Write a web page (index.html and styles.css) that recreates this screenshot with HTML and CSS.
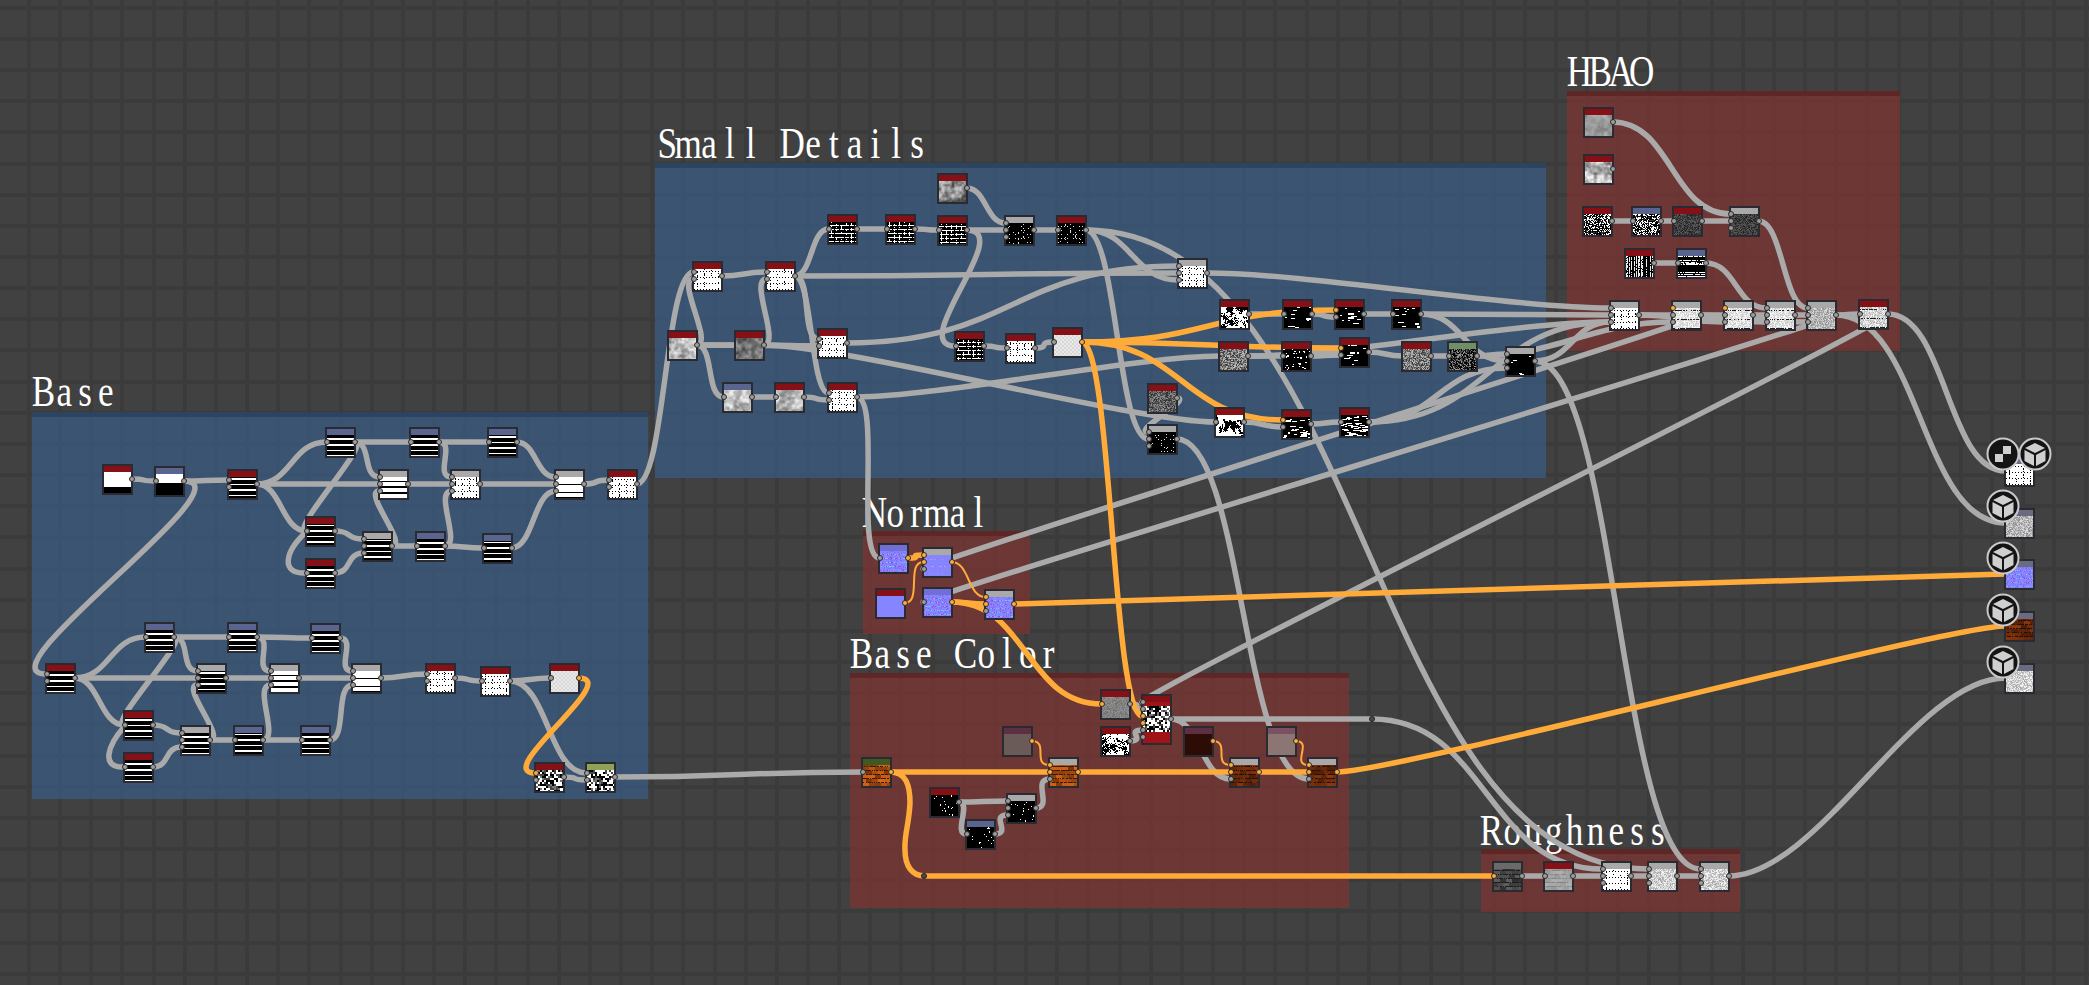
FILE: index.html
```html
<!DOCTYPE html>
<html lang="en">
<head>
<meta charset="utf-8">
<title>Material graph</title>
<link rel="stylesheet" href="styles.css">
</head>
<body>
<main class="canvas">
  <section class="frame frame-blue frame-base"></section>
  <section class="frame frame-blue frame-small"></section>
  <section class="frame frame-red frame-hbao"></section>
  <section class="frame frame-red frame-normal"></section>
  <section class="frame frame-red frame-color"></section>
  <section class="frame frame-red frame-rough"></section>

  <svg class="layer" width="2089" height="985" aria-label="Frame titles">
    <text class="label" transform="translate(33 406) scale(.78 1)" x="13.3 40 66.7 93.3">Base</text>
    <text class="label" transform="translate(657 158) scale(.78 1)" x="13.3 40 66.7 93.3 120 146.7 173.4 200 226.7 253.4 280 306.7 333.4">Small Details</text>
    <text class="label" transform="translate(1569 86) scale(.78 1)" x="13.3 40 66.7 93.3">HBAO</text>
    <text class="label" transform="translate(864 527) scale(.78 1)" x="13.3 40 66.7 93.3 120 146.7">Normal</text>
    <text class="label" transform="translate(851 668) scale(.78 1)" x="13.3 40 66.7 93.3 120 146.7 173.4 200 226.7 253.4">Base Color</text>
    <text class="label" transform="translate(1481 845) scale(.78 1)" x="13.3 40 66.7 93.3 120 146.7 173.4 200 226.7">Roughness</text>
  </svg>

  <svg class="layer" id="wires" width="2089" height="985" aria-hidden="true"></svg>
  <div class="layer" id="nodes"></div>
  <div class="layer" id="sockets"></div>

  <svg class="layer" width="2089" height="985" aria-label="Output badges">
    <defs>
      <symbol id="badge-cube" viewBox="-17 -17 34 34">
        <circle class="badge-disc" r="15.5"/>
        <path class="badge-ink" d="M0-11 10-6 0-1-10-6ZM-10.5-4-1 1V12L-10.5 7ZM10.5-4 1 1V12L10.5 7Z"/>
      </symbol>
      <symbol id="badge-check" viewBox="-17 -17 34 34">
        <circle class="badge-disc" r="15.5"/>
        <path class="badge-ink" d="M-8-8H8V8H-8Z"/>
        <path class="badge-hole" d="M-8-8H0V0H-8ZM0 0H8V8H0Z"/>
      </symbol>
    </defs>
    <use href="#badge-check" x="1986" y="437" width="34" height="34"/>
    <use href="#badge-cube" x="2018" y="437" width="34" height="34"/>
    <use href="#badge-cube" x="1986" y="489" width="34" height="34"/>
    <use href="#badge-cube" x="1986" y="541" width="34" height="34"/>
    <use href="#badge-cube" x="1986" y="593" width="34" height="34"/>
    <use href="#badge-cube" x="1986" y="645" width="34" height="34"/>
  </svg>
</main>
<script src="graph.js"></script>
</body>
</html>
```

FILE: styles.css
```css
html, body {
  margin: 0;
  padding: 0;
  background: #414141;
  overflow: hidden;
}

.canvas {
  position: relative;
  width: 2089px;
  height: 985px;
  overflow: hidden;
  background-color: #414141;
  background-image:
    repeating-linear-gradient(90deg, transparent 0 27px, #3b3b3b 27px 31px, transparent 31px 31.16px),
    repeating-linear-gradient(180deg, transparent 0 5.7px, #3b3b3b 5.7px 9.7px, transparent 9.7px 31.16px);
}

.layer {
  position: absolute;
  left: 0;
  top: 0;
}

.frame {
  position: absolute;
  box-sizing: border-box;
  border-top: 5px solid;
}

.frame-blue {
  background: rgba(55, 93, 135, .7);
  border-top-color: #2d4461;
}

.frame-red {
  background: rgba(128, 51, 50, .7);
  border-top-color: #5e2624;
}

.frame-base { left: 32px; top: 412px; width: 616px; height: 387px; }
.frame-small { left: 655px; top: 163px; width: 891px; height: 315px; }
.frame-hbao { left: 1567px; top: 91px; width: 333px; height: 260px; }
.frame-normal { left: 863px; top: 531px; width: 167px; height: 103px; }
.frame-color { left: 850px; top: 673px; width: 499px; height: 235px; }
.frame-rough { left: 1481px; top: 849px; width: 259px; height: 63px; }

.label {
  font-family: "Liberation Serif", serif;
  font-size: 45px;
  fill: #fff;
  text-anchor: middle;
}

.wire {
  fill: none;
  stroke: #aaa;
  stroke-width: 5.5;
}

.wire-color {
  stroke: #ffab3a;
}

.wire-thin {
  stroke: #ffab3a;
  stroke-width: 2;
}

.node {
  position: absolute;
  width: 27px;
  height: 27px;
  border: 2px solid #2a2a32;
}

.node-tall {
  height: 47px;
}

.thumb {
  display: block;
}

.head {
  position: absolute;
  left: 0;
  top: 0;
  width: 100%;
  height: 6px;
}

.head-r { background: #861015; }
.head-b { background: #59648f; }
.head-g { background: #a9a9a9; }
.head-d { background: #6a6a6a; }
.head-l { background: #8fa356; }
.head-m { background: #6d9066; }
.head-f { background: #3f5a20; }
.head-p { background: #5d2f40; }
.head-q { background: #7b5162; }
.head-o { background: #6a6a80; }
.head-n { background: #6f6fd6; }

.sock {
  position: absolute;
  width: 4px;
  height: 4px;
  border-radius: 50%;
  background: #9c9c9c;
  border: 1px solid #2c2c2c;
  transform: translate(-50%, -50%);
}

.sock-on {
  background: #ffab3a;
}

.dot {
  position: absolute;
  width: 4px;
  height: 4px;
  border-radius: 50%;
  background: #4a4a4a;
  border: 1px solid #222;
  transform: translate(-50%, -50%);
}

.badge-disc {
  fill: #141414;
  stroke: #c9c9c9;
  stroke-width: 2;
}

.badge-ink { fill: #cfcfcf; }
.badge-hole { fill: #161616; }
```

FILE: graph.js
```js
// Node table: id x y header thumbnail inputs (default 1) outputs (default 1)
const TABLE = `
n1 102 464 r wb78 0
n2 154 466 b wb55
n3 227 469 r L 2
n4 325 427 b L
n5 409 427 b L
n6 487 427 b L
n7 378 469 g LW 3
n8 450 469 g D 3
n9 554 469 g W 3
n10 607 469 r D 2
n11 305 516 r L
n12 362 531 g L 3
n13 415 531 b L
n14 482 533 b L
n15 305 558 r L
n16 144 622 b L
n17 227 622 b L
n18 310 623 b L
n19 45 663 r L 2
n20 196 663 g L 3
n21 269 663 g LW 3
n22 351 663 g W 3
n23 425 663 r D 2
n24 480 666 r D 1
n25 549 663 r C 1
n26 123 710 r L
n27 180 725 g L 3
n28 233 725 b L
n29 300 725 b L
n30 123 752 r L
n31 534 762 r p1 2
n32 585 762 l p1 2
a 937 173 r c5 0
b 827 214 r K
c 885 214 r K
d 937 215 r K
e 1004 215 g K2 3
f 1056 215 r K2
g 692 261 r D 2
h 765 261 r D 2
i 1177 258 g D 3
j 667 330 r c1 0
k 734 330 r c2 0
l 817 328 r D 2
m 954 331 r K
n 1005 333 r D
o 1052 327 r C
p 722 382 b c1
q 774 382 r c1
r 827 382 r D 2
s 1147 383 r z2b 0
t 1147 424 g K2 3
u 1219 299 r b1 0
v 1282 299 r d1
w 1334 299 r d1 2
x 1391 299 r d1
y 1218 341 r z1 0
z 1281 341 r d4
aa 1339 337 r d1 2
ab 1401 341 r z1 0
ac 1447 341 m p3
ad 1505 346 g d5 3
ae 1214 407 r b2
af 1281 409 r d2 2
ag 1339 407 r d3
A 1583 107 r c3 0
B 1583 154 r c4 0
C 1582 206 r p2 0
D 1631 206 b p2
E 1672 206 r z2
F 1729 206 g z2 3
G 1624 248 r stv 0
H 1676 248 b sth
I 1609 300 g D 3
J 1671 300 g z3 3
K 1723 300 g z3 3
L 1765 300 g z3 3
M 1806 300 g z4 3
N 1858 299 r z7
N1 878 543 n nor
N2 922 547 g nor2 3
N3 875 588 r #8585ff 0
N4 922 587 n nor
N5 984 589 g nor 3
B1 1100 689 r z5
B2 1141 694 r p1 6
B3 1100 726 r b3 0
B4 1002 726 p #6a5a58 0
B5 1048 757 g br1 3
B6 861 757 f br1
B7 929 787 r d6 0
B8 965 819 b d6
B9 1006 793 g d6 3
B10 1183 726 p #2c0c04 0
B11 1229 757 g br2 3
B12 1266 726 q #8c7674 0
B13 1307 757 g br2 3
R1 1492 861 d br3
R2 1543 861 r br4
R3 1601 861 g D 3
R4 1647 861 g z6 3
R5 1699 861 g z6 3
O1 2004 456 o D 0 0
O2 2004 508 o z4 0 0
O3 2004 559 o nor 0 0
O4 2004 611 o br2 0 0
O5 2004 663 o z6 0 0
`;

// Connections: from-to[.input][~tangent][!o thick orange | !t thin orange]
const LINKS = `
n1-n2 n2-n3.1 n3-n4 n3-n7.2 n3-n11 n4-n5 n4-n7.1 n4-n11~18 n5-n6 n5-n8.1 n6-n9.1 n7-n8.2 n8-n9.2
n11-n12.1 n15-n12.3 n12-n13 n13-n14 n14-n9.3 n12-n7.3 n13-n8.3 n9-n10.1 n10-g.1 n2-n19.1~70
n19-n16 n19-n20.2 n19-n26 n16-n17 n16-n20.1 n16-n26~18 n17-n18 n17-n21.1 n18-n22.1 n20-n21.2 n21-n22.2
n22-n23.1 n23-n24 n24-n25 n24-n32.1 n31-n32.2 n26-n27.1 n30-n27.3 n27-n28 n28-n29 n29-n22.3 n27-n20.3 n28-n21.3
n32-B6 j-k j-l.2 k-l.2 j-p j-g.2 g-h.1 k-h.2 h-b h-i.2 h-r.1 h-l.1 l-i.1 p-q q-r.2 r-y~80 r-N1~25 k-ae~80
b-c c-d d-e.2 e-f a-e.1 d-m~50 m-n n-o f-t.2 f-i.3 f-R4.1 i-I.1~100 s-t.1
u-v v-w.2 w-x x-I.2 y-z z-aa.2 aa-ab ab-ac ac-ad.1 x-ad.2 ag-ad.3 ad-I.3 y-I.3~100 ac-J.3~80 ae-af.2 af-ag ag-I.3 ad-R5.1~82 t-B13.3
A-F.1 C-D D-E E-F.2 F-M.1 G-H H-L.1 I-J.2 J-K.2 K-L.2 L-M.2 M-N N-O1 M-O2 I-K.3 I-L.3 J-M.3
N-B2.1~20 J-N2.3~20 M-N4~20
B1-B2.2 B3-B2.5 B2-B11.3 B7-B9.1 B7-B8~14 B8-B9.3 B9-B5.3 R1-R2 R2-R3.2 R3-R4.2 R4-R5.2 R5-O5~90
o-w.1!o o-aa.1!o o-af.1!o o-B2.3!o n25-n31.1~45!o
N1-N2.1!o N4-N5.2!o N5-O3~60!o N4-B1!o B6-B5.2!o B5-B11.2!o B11-B13.2!o B13-O4~60!o
N3-N2.2!t N2-N5.1!t B4-B5.1!t B10-B11.1!t B12-B13.1!t
`;

// Hand-routed wires that leave a socket backwards or through a reroute dot.
const ROUTES = [
  ['M305 533C285 552 280 574 306 573', ''],
  ['M124 727C108 745 100 768 124 767', ''],
  ['M1171 719H1372', ''],
  ['M1372 719C1487 719 1487 869 1602 869', ''],
  ['M890 772C906 772 910 785 910 803C909 825 904 835 905 850C905 866 912 876 925 876H1493', 'wire-color']
];
const DOTS = [[924, 876], [1372, 719]];
const LIT = ['J.1', 'K.1', 'B2.4', 'N2.1'];

const SVGNS = 'http://www.w3.org/2000/svg';
const nodes = {};
TABLE.trim().split('\n').forEach((line, index) => {
  const [id, x, y, head, thumb, ins, outs] = line.trim().split(/\s+/);
  nodes[id] = {
    id, x: +x, y: +y, head, thumb, index,
    ins: ins === undefined ? 1 : +ins,
    outs: outs === undefined ? 1 : +outs,
    lit: {}
  };
});

function inputOffsets(count) {
  if (count === 6) return [8, 15, 22, 29, 36, 43];
  if (count === 3) return [8, 15, 22];
  if (count === 2) return [11, 18];
  return [15];
}

function outputY(node) {
  return node.y + (node.ins === 6 ? 25 : 15);
}

const wires = document.getElementById('wires');
function addPath(d, extra) {
  const path = document.createElementNS(SVGNS, 'path');
  path.setAttribute('d', d);
  path.setAttribute('class', ('wire ' + (extra || '')).trim());
  wires.appendChild(path);
}

const parsed = LINKS.trim().split(/\s+/).map(token => {
  const m = token.match(/^(\w+)-(\w+)(?:\.(\d))?(?:~(\d+))?(?:!(\w))?$/);
  return { from: nodes[m[1]], to: nodes[m[2]], slot: m[3] ? +m[3] - 1 : null, tangent: m[4] ? +m[4] : null, kind: m[5] || '' };
});

ROUTES.filter(r => !r[1]).forEach(r => addPath(r[0], r[1]));
parsed.sort((a, b) => (a.kind ? 1 : 0) - (b.kind ? 1 : 0));
parsed.forEach(link => {
  const offsets = inputOffsets(link.to.ins);
  const slot = link.slot === null ? (offsets.length === 3 ? 1 : 0) : link.slot;
  const x1 = link.from.x + 29.5;
  const y1 = outputY(link.from);
  const x2 = link.to.x + 1.5;
  const y2 = link.to.y + (offsets[slot] === undefined ? 15 : offsets[slot]);
  const d = link.tangent !== null ? link.tangent : Math.max(Math.abs(x2 - x1) * 0.5, 18);
  const cls = link.kind === 'o' ? 'wire-color' : link.kind === 't' ? 'wire-thin' : '';
  addPath(`M${x1} ${y1}C${x1 + d} ${y1} ${x2 - d} ${y2} ${x2} ${y2}`, cls);
  if (link.kind) {
    link.from.litOut = true;
    link.to.lit[slot] = true;
  }
});
ROUTES.filter(r => r[1]).forEach(r => addPath(r[0], r[1]));
nodes.B6.litOut = true;
nodes.R1.lit[0] = true;
LIT.forEach(entry => {
  const [id, slot] = entry.split('.');
  nodes[id].lit[+slot - 1] = true;
});

// Procedural previews -----------------------------------------------------
function makeRandom(seed) {
  let s = (seed * 2654435761 + 12345) >>> 0;
  const next = () => {
    s = (s + 0x6d2b79f5) >>> 0;
    let t = Math.imul(s ^ (s >>> 15), 1 | s);
    t = (t + Math.imul(t ^ (t >>> 7), 61 | t)) ^ t;
    return ((t ^ (t >>> 14)) >>> 0) / 4294967296;
  };
  return next;
}

function smoothNoise(rand, cells) {
  const grid = [];
  for (let i = 0; i < (cells + 2) * (cells + 2); i++) grid.push(rand());
  const at = (a, b) => grid[b * (cells + 2) + a];
  const s = t => t * t * (3 - 2 * t);
  return (x, y) => {
    const fx = x / 27 * cells;
    const fy = y / 27 * cells;
    const ix = Math.floor(fx);
    const iy = Math.floor(fy);
    const tx = s(fx - ix);
    const ty = s(fy - iy);
    const top = at(ix, iy) * (1 - tx) + at(ix + 1, iy) * tx;
    const low = at(ix, iy + 1) * (1 - tx) + at(ix + 1, iy + 1) * tx;
    return top * (1 - ty) + low * ty;
  };
}

function cloud(rand) {
  const a = smoothNoise(rand, 4);
  const b = smoothNoise(rand, 8);
  const c = smoothNoise(rand, 14);
  return (x, y) => Math.min(1, Math.max(0, (a(x, y) * .4 + b(x, y) * .38 + c(x, y) * .22 - .5) * 2 + .5));
}

const grey = v => `rgb(${v | 0},${v | 0},${v | 0})`;

function field(ctx, w, h, fn) {
  for (let y = 0; y < h; y++) {
    for (let x = 0; x < w; x++) {
      ctx.fillStyle = fn(x, y);
      ctx.fillRect(x, y, 1, 1);
    }
  }
}

const cloudKind = (lo, hi) => (ctx, w, h, rand) => {
  const f = cloud(rand);
  field(ctx, w, h, (x, y) => grey(lo + (hi - lo) * f(x, y)));
};
const noiseKind = (lo, hi, lines) => (ctx, w, h, rand) => {
  field(ctx, w, h, (x, y) => grey(lines && y % 9 === 8 && rand() < .6 ? 30 : lo + (hi - lo) * rand()));
};
const blobKind = (level, jitter) => (ctx, w, h, rand) => {
  const f = cloud(rand);
  field(ctx, w, h, (x, y) => grey(f(x, y) + (rand() - .5) * jitter > level ? 255 : 0));
};
const dashKind = (count, minW, maxW) => (ctx, w, h, rand) => {
  ctx.fillStyle = '#000';
  ctx.fillRect(0, 0, w, h);
  ctx.fillStyle = '#fff';
  for (let i = 0; i < count; i++) {
    const dw = minW + Math.floor(rand() * (maxW - minW + 1));
    ctx.fillRect(Math.floor(rand() * w), 6 + Math.floor(rand() * (h - 6)), dw, rand() < .25 ? 2 : 1);
  }
};
const blockKind = (cw, ch, weights) => (ctx, w, h, rand) => {
  for (let y = 0; y < h; y += ch) {
    for (let x = 0; x < w; x += cw) {
      ctx.fillStyle = grey(weights[Math.floor(rand() * weights.length)]);
      ctx.fillRect(x, y, cw, ch);
    }
  }
};
const brickKind = (r, g, b, spread, mortar) => (ctx, w, h, rand) => {
  for (let y = 0; y < h; y += 4) {
    const shift = (y / 4 % 2) * 3;
    for (let x = -shift; x < w; x += 6) {
      const k = 1 - spread + rand() * spread * 2;
      ctx.fillStyle = `rgb(${r * k | 0},${g * k | 0},${b * k | 0})`;
      ctx.fillRect(x, y, 6, 4);
    }
    ctx.fillStyle = `rgb(${r * mortar | 0},${g * mortar | 0},${b * mortar | 0})`;
    for (let x = 0; x < w; x++) {
      if (rand() < .7) ctx.fillRect(x, y + 3, 1, 1);
    }
  }
};

const STRIPES = [[7, 8, 13, 18, 19, 24], [9, 10, 15, 16, 21, 26], [7, 12, 13, 18, 23, 24]];

const KINDS = {
  wb78: (ctx, w, h) => field(ctx, w, h, (x, y) => grey(y < 21 ? 255 : 0)),
  wb55: (ctx, w, h) => field(ctx, w, h, (x, y) => grey(y < 15 ? 255 : 0)),
  L: (ctx, w, h, rand) => {
    const rows = STRIPES[Math.floor(rand() * STRIPES.length)];
    field(ctx, w, h, (x, y) => grey(rows.includes(y) ? 255 : 0));
  },
  LW: (ctx, w, h) => field(ctx, w, h, (x, y) => grey(y === 10 || y === 15 || y === 16 || y === 21 || y === 22 ? 0 : 255)),
  W: (ctx, w, h) => field(ctx, w, h, (x, y) => grey(y === 13 || y === 21 || y === 26 ? 0 : 255)),
  D: (ctx, w, h, rand) => field(ctx, w, h, (x, y) => {
    if (y % 6 === 2) return grey(x % 3 === 0 ? 0 : 255);
    return grey(x % 7 === 3 && rand() < .3 ? 0 : 255);
  }),
  K: (ctx, w, h, rand) => field(ctx, w, h, (x, y) => {
    if (y % 4 === 1) return grey(x % 5 === 0 && rand() < .6 ? 0 : 255);
    return grey(x % 5 === 2 && rand() < .45 ? 255 : 0);
  }),
  K2: (ctx, w, h, rand) => field(ctx, w, h, (x, y) => grey(y % 4 === 1 ? (x % 3 === 0 && rand() < .5 ? 230 : 0) : (x % 5 === 2 && rand() < .15 ? 220 : 0))),
  C: (ctx, w, h) => field(ctx, w, h, (x, y) => ((x >> 1) + (y >> 1)) % 2 ? '#e9e9e9' : '#d8d8d8'),
  c1: cloudKind(125, 235),
  c2: cloudKind(70, 150),
  c3: cloudKind(130, 175),
  c4: cloudKind(100, 240),
  c5: cloudKind(70, 195),
  z1: noiseKind(50, 195),
  z2: noiseKind(30, 95),
  z2b: noiseKind(40, 150),
  z3: noiseKind(195, 255, true),
  z4: noiseKind(140, 225),
  z5: noiseKind(110, 150),
  z6: noiseKind(165, 250),
  z7: noiseKind(170, 255, true),
  b1: blobKind(.46, .5),
  b2: blobKind(.42, .25),
  b3: blobKind(.38, .7),
  d1: dashKind(11, 2, 6),
  d2: dashKind(26, 2, 8),
  d3: dashKind(44, 2, 7),
  d4: dashKind(34, 1, 2),
  d5: dashKind(5, 2, 4),
  d6: dashKind(16, 1, 1),
  p1: blockKind(2, 2, [0, 0, 255, 255, 255, 120, 70]),
  p2: blockKind(1, 1, [0, 0, 0, 255, 255, 60]),
  p3: blockKind(1, 1, [0, 0, 30, 70, 110, 150]),
  stv: (ctx, w, h, rand) => {
    const cols = [];
    for (let x = 0; x < w; x++) cols.push(rand());
    field(ctx, w, h, (x, y) => grey(cols[x] > .5 && rand() > .3 ? 235 : 0));
  },
  sth: (ctx, w, h, rand) => {
    const rows = [];
    for (let y = 0; y < h; y++) rows.push(rand());
    field(ctx, w, h, (x, y) => grey(rows[y] > .5 && rand() > .2 ? 255 : 0));
  },
  nor: (ctx, w, h, rand) => field(ctx, w, h, (x, y) => {
    const roll = rand();
    if (y % 4 === 1 && roll < .5) return roll < .25 ? '#b43ae0' : '#6cc8f0';
    return roll < .3 ? '#7a72f4' : '#8a86ff';
  }),
  nor2: (ctx, w, h, rand) => field(ctx, w, h, (x, y) => (y % 7 === 3 && rand() < .25 ? '#c98cf0' : '#8585ff')),
  br1: brickKind(170, 78, 18, .3, .35),
  br2: brickKind(110, 44, 12, .3, .35),
  br3: brickKind(70, 70, 70, .35, .4),
  br4: brickKind(165, 165, 165, .08, .8)
};

function paintThumb(canvas, node) {
  const ctx = canvas.getContext('2d');
  const w = canvas.width;
  const h = canvas.height;
  if (node.thumb[0] === '#') {
    ctx.fillStyle = node.thumb;
    ctx.fillRect(0, 0, w, h);
    return;
  }
  KINDS[node.thumb](ctx, w, h, makeRandom(node.index + 7));
  if (node.ins === 6) {
    ctx.fillStyle = '#a01418';
    ctx.fillRect(0, 0, w, 10);
    ctx.fillRect(0, h - 11, w, 11);
  }
}

// Build the DOM ----------------------------------------------------------
const nodeLayer = document.getElementById('nodes');
const socketLayer = document.getElementById('sockets');

function addSocket(x, y, lit) {
  const el = document.createElement('span');
  el.className = lit ? 'sock sock-on' : 'sock';
  el.style.left = x + 'px';
  el.style.top = y + 'px';
  socketLayer.appendChild(el);
}

Object.values(nodes).forEach(node => {
  const el = document.createElement('article');
  el.className = node.ins === 6 ? 'node node-tall' : 'node';
  el.style.left = node.x + 'px';
  el.style.top = node.y + 'px';
  const canvas = document.createElement('canvas');
  canvas.className = 'thumb';
  canvas.width = 27;
  canvas.height = node.ins === 6 ? 47 : 27;
  paintThumb(canvas, node);
  const head = document.createElement('div');
  head.className = 'head head-' + node.head;
  el.append(canvas, head);
  nodeLayer.appendChild(el);
  if (node.ins > 0) {
    inputOffsets(node.ins).forEach((offset, slot) => addSocket(node.x + 1.5, node.y + offset, node.lit[slot]));
  }
  if (node.outs > 0) addSocket(node.x + 29.5, outputY(node), node.litOut);
});

DOTS.forEach(([x, y]) => {
  const el = document.createElement('span');
  el.className = 'dot';
  el.style.left = x + 'px';
  el.style.top = y + 'px';
  socketLayer.appendChild(el);
});
```
